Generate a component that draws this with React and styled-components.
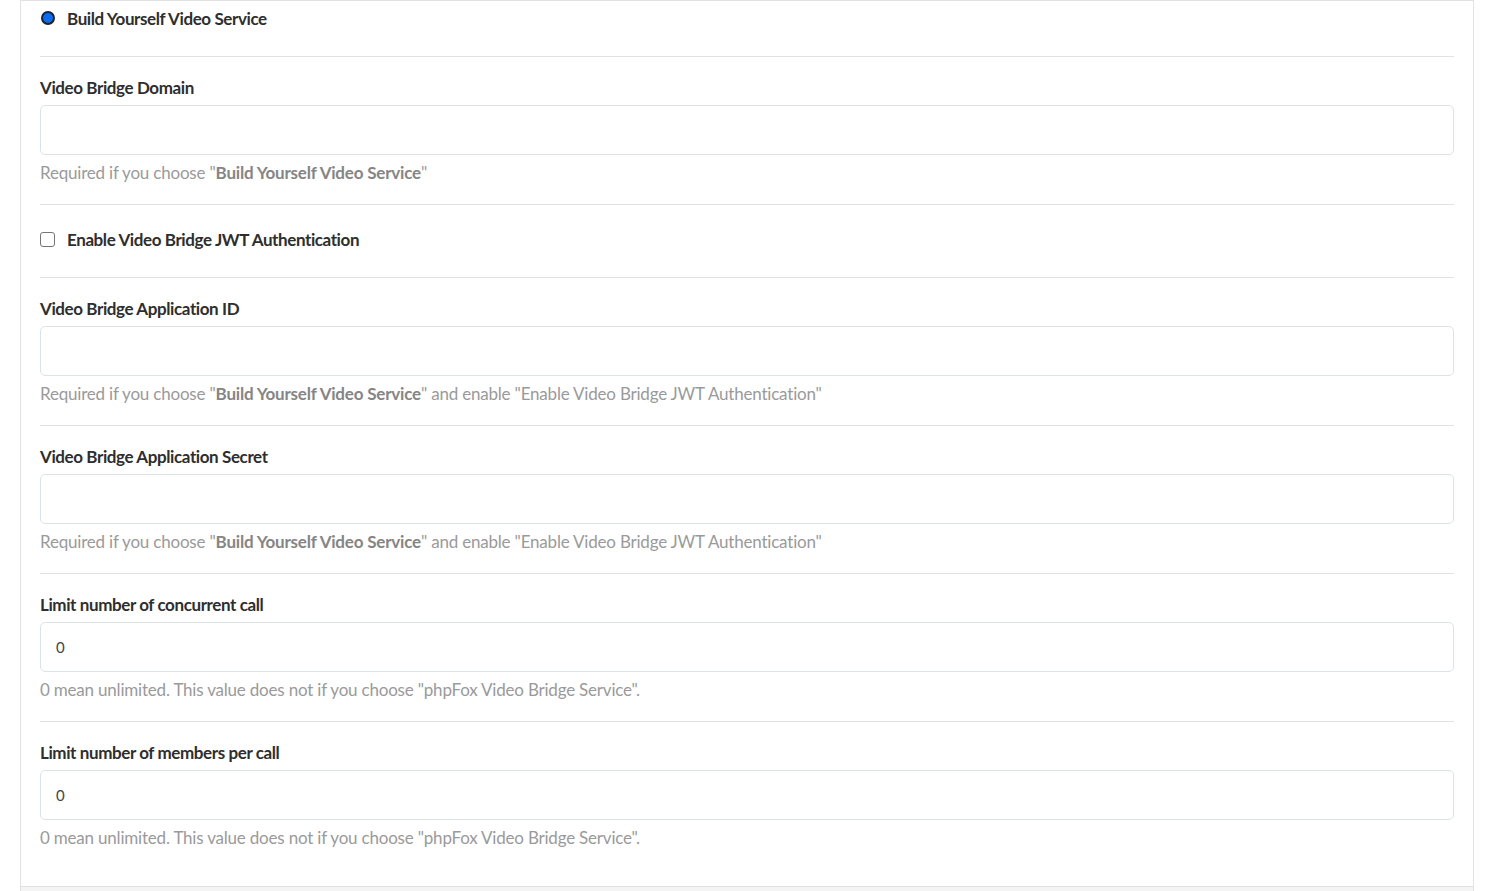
import React from 'react'
import styled, { createGlobalStyle } from 'styled-components'

const GlobalStyle = createGlobalStyle`
  html, body{
    margin:0;
    padding:0;
    background:#fff;
    font-family:Lato, "Noto Sans", sans-serif;
  }
`

const fields = [
  {
    id: 'domain',
    label: 'Video Bridge Domain',
    value: '',
    help: <>Required if you choose "<b>Build Yourself Video Service</b>"</>,
  },
  { id: 'jwt', check: 'Enable Video Bridge JWT Authentication' },
  {
    id: 'appid',
    label: 'Video Bridge Application ID',
    value: '',
    help: <>Required if you choose "<b>Build Yourself Video Service</b>" and enable "Enable Video Bridge JWT Authentication"</>,
  },
  {
    id: 'secret',
    label: 'Video Bridge Application Secret',
    value: '',
    help: <>Required if you choose "<b>Build Yourself Video Service</b>" and enable "Enable Video Bridge JWT Authentication"</>,
  },
  {
    id: 'concurrent',
    label: 'Limit number of concurrent call',
    value: '0',
    help: '0 mean unlimited. This value does not if you choose "phpFox Video Bridge Service".',
  },
  {
    id: 'members',
    label: 'Limit number of members per call',
    value: '0',
    help: '0 mean unlimited. This value does not if you choose "phpFox Video Bridge Service".',
  },
]

const App = () => {
  return(
    <>
      <GlobalStyle />
      <Page>
        <Panel>
          <Body>
            <OptionRow first>
              <Radio />
              <OptionText>Build Yourself Video Service</OptionText>
            </OptionRow>
            {fields.map((f) => f.check ? (
              <OptionRow key={f.id}>
                <Checkbox />
                <OptionText>{f.check}</OptionText>
              </OptionRow>
            ) : (
              <Group key={f.id}>
                <Label htmlFor={f.id}>{f.label}</Label>
                <Input id={f.id} defaultValue={f.value} />
                <Help>{f.help}</Help>
              </Group>
            ))}
          </Body>
          <Footer />
        </Panel>
      </Page>
    </>
  )
}

const Page = styled.div`
  box-sizing:border-box;
  width:1488px;
  height:891px;
  padding:0 14px 0 20px;
  overflow:hidden;
`

const Panel = styled.div`
  box-sizing:border-box;
  border:1px solid #e2e2e2;
  border-bottom:none;
  background:#fff;
  min-height:891px;
  display:flex;
  flex-direction:column;
`

const Body = styled.div`
  padding:0 19px;
`

const Footer = styled.div`
  flex:1;
  background:#f4f4f4;
  border-top:1px solid #e2e2e2;
`

const OptionRow = styled.label`
  display:flex;
  align-items:center;
  gap:12px;
  height:22px;
  padding:${p => p.first ? '6px 0 27px' : '23px 0 27px'};
  border-bottom:1px solid #e2e2e2;
  cursor:pointer;
`

const Radio = styled.span`
  box-sizing:border-box;
  width:14px;
  height:14px;
  border-radius:50%;
  background:#0b6cf0;
  border:2px solid #1b2330;
  margin-left:1px;
`

const Checkbox = styled.span`
  box-sizing:border-box;
  width:15px;
  height:15px;
  border-radius:3px;
  border:1px solid #767676;
  background:#fff;
`

const OptionText = styled.span`
  font-size:17px;
  font-weight:700;
  color:#2e2e2e;
  letter-spacing:-0.4px;
`

const Group = styled.div`
  padding:20px 0 20px;
  border-bottom:1px solid #e2e2e2;
  display:flex;
  flex-direction:column;
  &:last-child{
    border-bottom:none;
    padding-bottom:37px;
  }
`

const Label = styled.label`
  line-height:22px;
  font-size:17px;
  font-weight:700;
  color:#2e2e2e;
  letter-spacing:-0.4px;
  margin-bottom:6px;
`

const Input = styled.input`
  box-sizing:border-box;
  height:50px;
  width:100%;
  border:1px solid #dce3e8;
  border-radius:5px;
  padding:0 15px;
  font-family:Lato, "Noto Sans", sans-serif;
  font-size:15px;
  color:#444;
  &:focus{
    outline:none;
  }
`

const Help = styled.div`
  margin-top:7px;
  line-height:22px;
  font-size:17px;
  color:#9a9a9a;
  letter-spacing:-0.2px;
  b{
    color:#858585;
    font-weight:700;
  }
`

export default App
